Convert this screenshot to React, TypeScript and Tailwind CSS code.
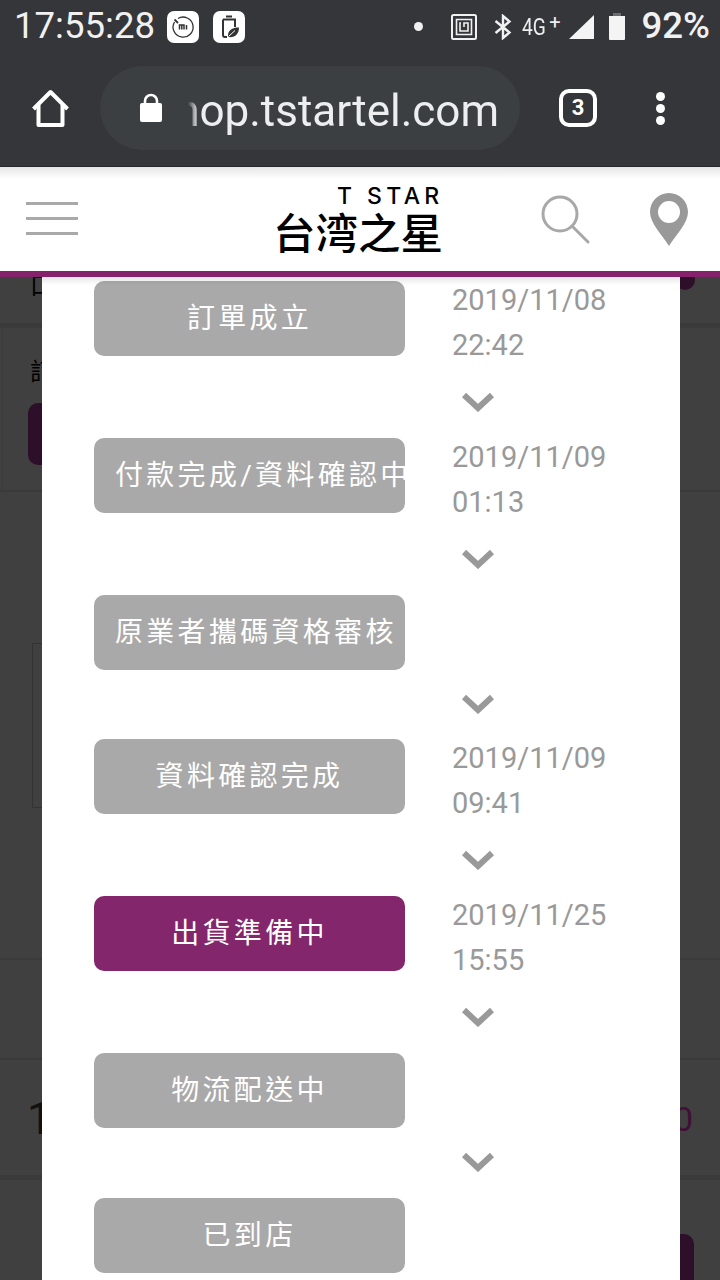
import React from 'react';

interface Step {
  label: string;
  date?: string;
  time?: string;
  active?: boolean;
  last?: boolean;
  tight?: boolean;
}

const steps: Step[] = [
  { label: '訂單成立', date: '2019/11/08', time: '22:42' },
  { label: '付款完成/資料確認中', date: '2019/11/09', time: '01:13' },
  { label: '原業者攜碼資格審核', tight: true },
  { label: '資料確認完成', date: '2019/11/09', time: '09:41' },
  { label: '出貨準備中', date: '2019/11/25', time: '15:55', active: true },
  { label: '物流配送中' },
  { label: '已到店', last: true },
];

function StatusBar() {
  return (
    <div className="flex h-[53px] items-center pl-[14px] pr-[10px] text-white">
      <span className="text-[36.6px] leading-none text-[#f1f1f1]">17:55:28</span>
      <div className="ml-[12px] flex h-[32px] w-[32px] items-center justify-center rounded-[7px] bg-white">
        <svg width="26" height="26" viewBox="0 0 26 26" fill="none" stroke="#333" strokeWidth="1.3">
          <path d="M8 4.5 A10 10 0 1 1 4.5 8" />
          <path d="M4.5 5.5 L8 9" strokeWidth="1.8" />
          <path d="M9.5 15.5 V11 H14 V15.5 M11.8 11.5 V15.5 M16.5 11 V15.5" strokeWidth="1.5" />
        </svg>
      </div>
      <div className="ml-[14px] flex h-[32px] w-[32px] items-center justify-center rounded-[7px] bg-white">
        <svg width="26" height="26" viewBox="0 0 26 26" fill="none">
          <path d="M10 2.5 H16 M7 5.5 H19 V13 M7 5.5 V21 Q7 23 9 23 H11" stroke="#333" strokeWidth="2" />
          <path d="M12 23 C11.5 16 16 13.5 23 13.5 C23 20 19 24 12 23 Z" fill="#333" />
          <path d="M12.5 22.5 L19 16.5" stroke="#fff" strokeWidth="1" />
        </svg>
      </div>
      <div className="ml-auto flex items-center">
        <div className="h-[9px] w-[9px] rounded-full bg-[#f1f1f1]" />
        <svg className="ml-[28px]" width="26" height="26" viewBox="0 0 26 26" fill="none" stroke="#f1f1f1">
          <rect x="1" y="1" width="24" height="24" rx="1.5" strokeWidth="2" />
          <path d="M5.5 5.5 H20.5 V20.5 H5.5 Z" strokeWidth="1.6" />
          <path d="M10 9 H9 V17 H17 V9 H13 V13" strokeWidth="1.6" />
        </svg>
        <svg className="ml-[17px]" width="18" height="26" viewBox="0 0 18 26" fill="none" stroke="#f1f1f1" strokeWidth="2.4">
          <path d="M1.5 7 L15.5 18.5 L9 24 V2 L15.5 7.5 L1.5 19" />
        </svg>
        <span className="ml-[10px] flex items-start text-[#eee]">
          <span className="inline-block w-[27px] origin-left scale-x-[.8] text-[24px] leading-[24px]">4G</span>
          <span className="-mt-[3px] text-[20px] leading-[20px]">+</span>
        </span>
        <svg className="ml-[9px]" width="25" height="24" viewBox="0 0 25 24" fill="#f4f4f4">
          <path d="M25 0 V24 H0 Z" />
        </svg>
        <svg className="ml-[14px]" width="18" height="27" viewBox="0 0 18 27">
          <path d="M5 0 H13 V3 H5 Z" fill="#6b6c6e" />
          <path d="M1 3 H17 V26 Q17 27 16 27 H2 Q1 27 1 26 Z" fill="#f4f4f4" />
        </svg>
        <span className="ml-[15px] text-[36.6px] font-medium leading-none text-[#f1f1f1]">92%</span>
      </div>
    </div>
  );
}

function Toolbar() {
  return (
    <div className="flex h-[114px] items-center border-b border-[#26272a] pb-[3px] pl-[31px]">
      <svg width="39" height="39" viewBox="0 0 39 39" fill="none" stroke="#fff" strokeWidth="4" strokeLinejoin="round">
        <path d="M2.5 20 L19.5 3 L36.5 20" />
        <path d="M7.5 16 V36 H31.5 V16" />
      </svg>
      <div className="ml-[30px] flex h-[84px] w-[420px] items-center rounded-full bg-[#3b3f42] pl-[39px]">
        <svg width="24" height="30" viewBox="0 0 24 30" fill="#fff">
          <path d="M1 12 Q1 10 3 10 H21 Q23 10 23 12 V27 Q23 29 21 29 H3 Q1 29 1 27 Z" />
          <path d="M6 11 V8 A6 6 0 0 1 18 8 V11" fill="none" stroke="#fff" strokeWidth="2.6" />
        </svg>
        <div className="ml-[25px] flex h-[60px] w-[311px] items-center justify-end overflow-hidden pt-[6px] [mask-image:linear-gradient(to_right,transparent,black_10px)]">
          <span className="whitespace-nowrap text-[44px] leading-none text-[#eceef0]">shop.tstartel.com</span>
        </div>
      </div>
      <div className="ml-[39px] flex h-[38px] w-[38px] items-center justify-center rounded-[10px] border-[4px] border-white text-[22px] font-bold leading-none text-white">
        3
      </div>
      <div className="ml-[59px] flex flex-col gap-[3px]">
        <div className="h-[9px] w-[9px] rounded-full bg-white" />
        <div className="h-[9px] w-[9px] rounded-full bg-white" />
        <div className="h-[9px] w-[9px] rounded-full bg-white" />
      </div>
    </div>
  );
}

function SiteHeader() {
  return (
    <div className="relative z-10 flex h-[110px] items-start border-b-[6px] border-[#86226b] bg-white">
      <div className="absolute left-0 top-0 h-[12px] w-full bg-gradient-to-b from-black/10 to-transparent" />
      <div className="ml-[26px] mt-[35px] flex w-[52px] flex-col gap-[12px]">
        <div className="h-[3px] bg-[#a9a9a9]" />
        <div className="h-[3px] bg-[#a9a9a9]" />
        <div className="h-[3px] bg-[#a9a9a9]" />
      </div>
      <div className="ml-[195px] mt-[18px] flex w-[170px] flex-col">
        <span className="ml-[64px] whitespace-nowrap text-[23px] font-medium leading-[22px] tracking-[4.4px] text-black font-['Inter']">
          T STAR
        </span>
        <span className="mt-[4px] whitespace-nowrap text-[42.5px] font-medium leading-[48px] text-black">台湾之星</span>
      </div>
      <svg className="ml-[98px] mt-[28px]" width="50" height="50" viewBox="0 0 50 50" fill="none" stroke="#a8a8a8" strokeWidth="3">
        <circle cx="19" cy="19" r="17" />
        <path d="M31 31 L47 47" strokeLinecap="round" />
      </svg>
      <svg className="ml-[59px] mt-[26px]" width="38" height="53" viewBox="0 0 38 53">
        <path
          fillRule="evenodd"
          fill="#999"
          d="M19 0 C8.500 0 0 8.500 0 19 C0 30 12 42 19 53 C26 42 38 30 38 19 C38 8.500 29.500 0 19 0 Z M19 8 A11 11 0 1 1 19 30 A11 11 0 1 1 19 8 Z"
        />
      </svg>
    </div>
  );
}

// the dimmed page behind the modal, only its edges show
function DimmedPage() {
  return (
    <div className="bg-[#404040]">
      <div className="flex h-[51px] items-start border-b-[5px] border-[#3a3a3a]">
        <span className="ml-[30px] text-[24px] leading-[18px] text-black">口</span>
        <div className="ml-auto mr-[25px] h-[13px] w-[20px] rounded-b-full bg-[#2e0f29]" />
      </div>
      <div className="ml-[2px] h-[162px] border-l border-[#3a3a3a] pl-[25px] pt-[30px]">
        <span className="ml-[2px] block h-[45px] text-[24px] leading-[28px] text-black">訂</span>
        <div className="h-[62px] w-[40px] rounded-[10px] bg-[#2e0f29]" />
      </div>
      <div className="border-t-[2px] border-[#3a3a3a] pl-[32px] pt-[151px]">
        <div className="h-[165px] w-[40px] border border-[#333]" />
      </div>
      <div className="mt-[150px] h-[102px] border-y-[2px] border-[#3a3a3a]" />
      <div className="flex h-[120px] items-center justify-between border-b-[5px] border-[#3a3a3a] pl-[27px] pr-[27px] pt-[2px]">
        <span className="text-[44px] leading-none text-[#111]">1</span>
        <span className="text-[34px] leading-none text-[#3f0f36]">0</span>
      </div>
      <div className="flex h-[110px] justify-end pr-[26px] pt-[54px]">
        <div className="h-[60px] w-[40px] rounded-[10px] bg-[#2e0f29]" />
      </div>
    </div>
  );
}

function Chevron() {
  return (
    <svg className="ml-[10px] block" width="32" height="20" viewBox="0 0 32 20" fill="none" stroke="#999" strokeWidth="6">
      <path d="M2 3 L16 16 L30 3" />
    </svg>
  );
}

function StepRow({ step }: { step: Step }) {
  return (
    <div className="flex items-start">
      <div
        className={
          step.active
            ? 'h-[75px] w-[311px] shrink-0 overflow-hidden whitespace-nowrap rounded-[10px] bg-[#83266b] px-[21px] text-center text-[28px] leading-[75px] tracking-[3.3px] text-white'
            : 'h-[75px] w-[311px] shrink-0 overflow-hidden whitespace-nowrap rounded-[10px] bg-[#a9a9a9] px-[21px] text-center text-[28px] leading-[75px] tracking-[3.3px] text-white'
        }
      >
        {step.label}
      </div>
      <div className="ml-[47px] flex-1">
        {step.date ? (
          <div className="-mt-[3px] mb-[24px] h-[90px] text-[29px] leading-[45px] text-[#999]">
            <div>{step.date}</div>
            <div>{step.time}</div>
          </div>
        ) : (
          <div className="mb-[24px] h-[75px]" />
        )}
        {!step.last && (
          <div className={step.tight ? 'mb-[25px]' : 'mb-[26px]'}>
            <Chevron />
          </div>
        )}
      </div>
    </div>
  );
}

export default function App() {
  return (
    <div className="h-[1280px] w-[720px] overflow-hidden bg-[#35363a] font-['Roboto','Noto_Sans_CJK_TC',sans-serif]">
      <StatusBar />
      <Toolbar />
      <SiteHeader />
      <div className="relative h-[1003px] overflow-hidden">
        <DimmedPage />
        <div className="absolute left-[42px] top-0 h-full w-[638px] bg-white pl-[52px] pt-[4px]">
          {steps.map((step) => (
            <StepRow key={step.label} step={step} />
          ))}
        </div>
        <div className="absolute left-[42px] top-0 h-[8px] w-[638px] bg-gradient-to-b from-black/10 to-transparent" />
      </div>
    </div>
  );
}
